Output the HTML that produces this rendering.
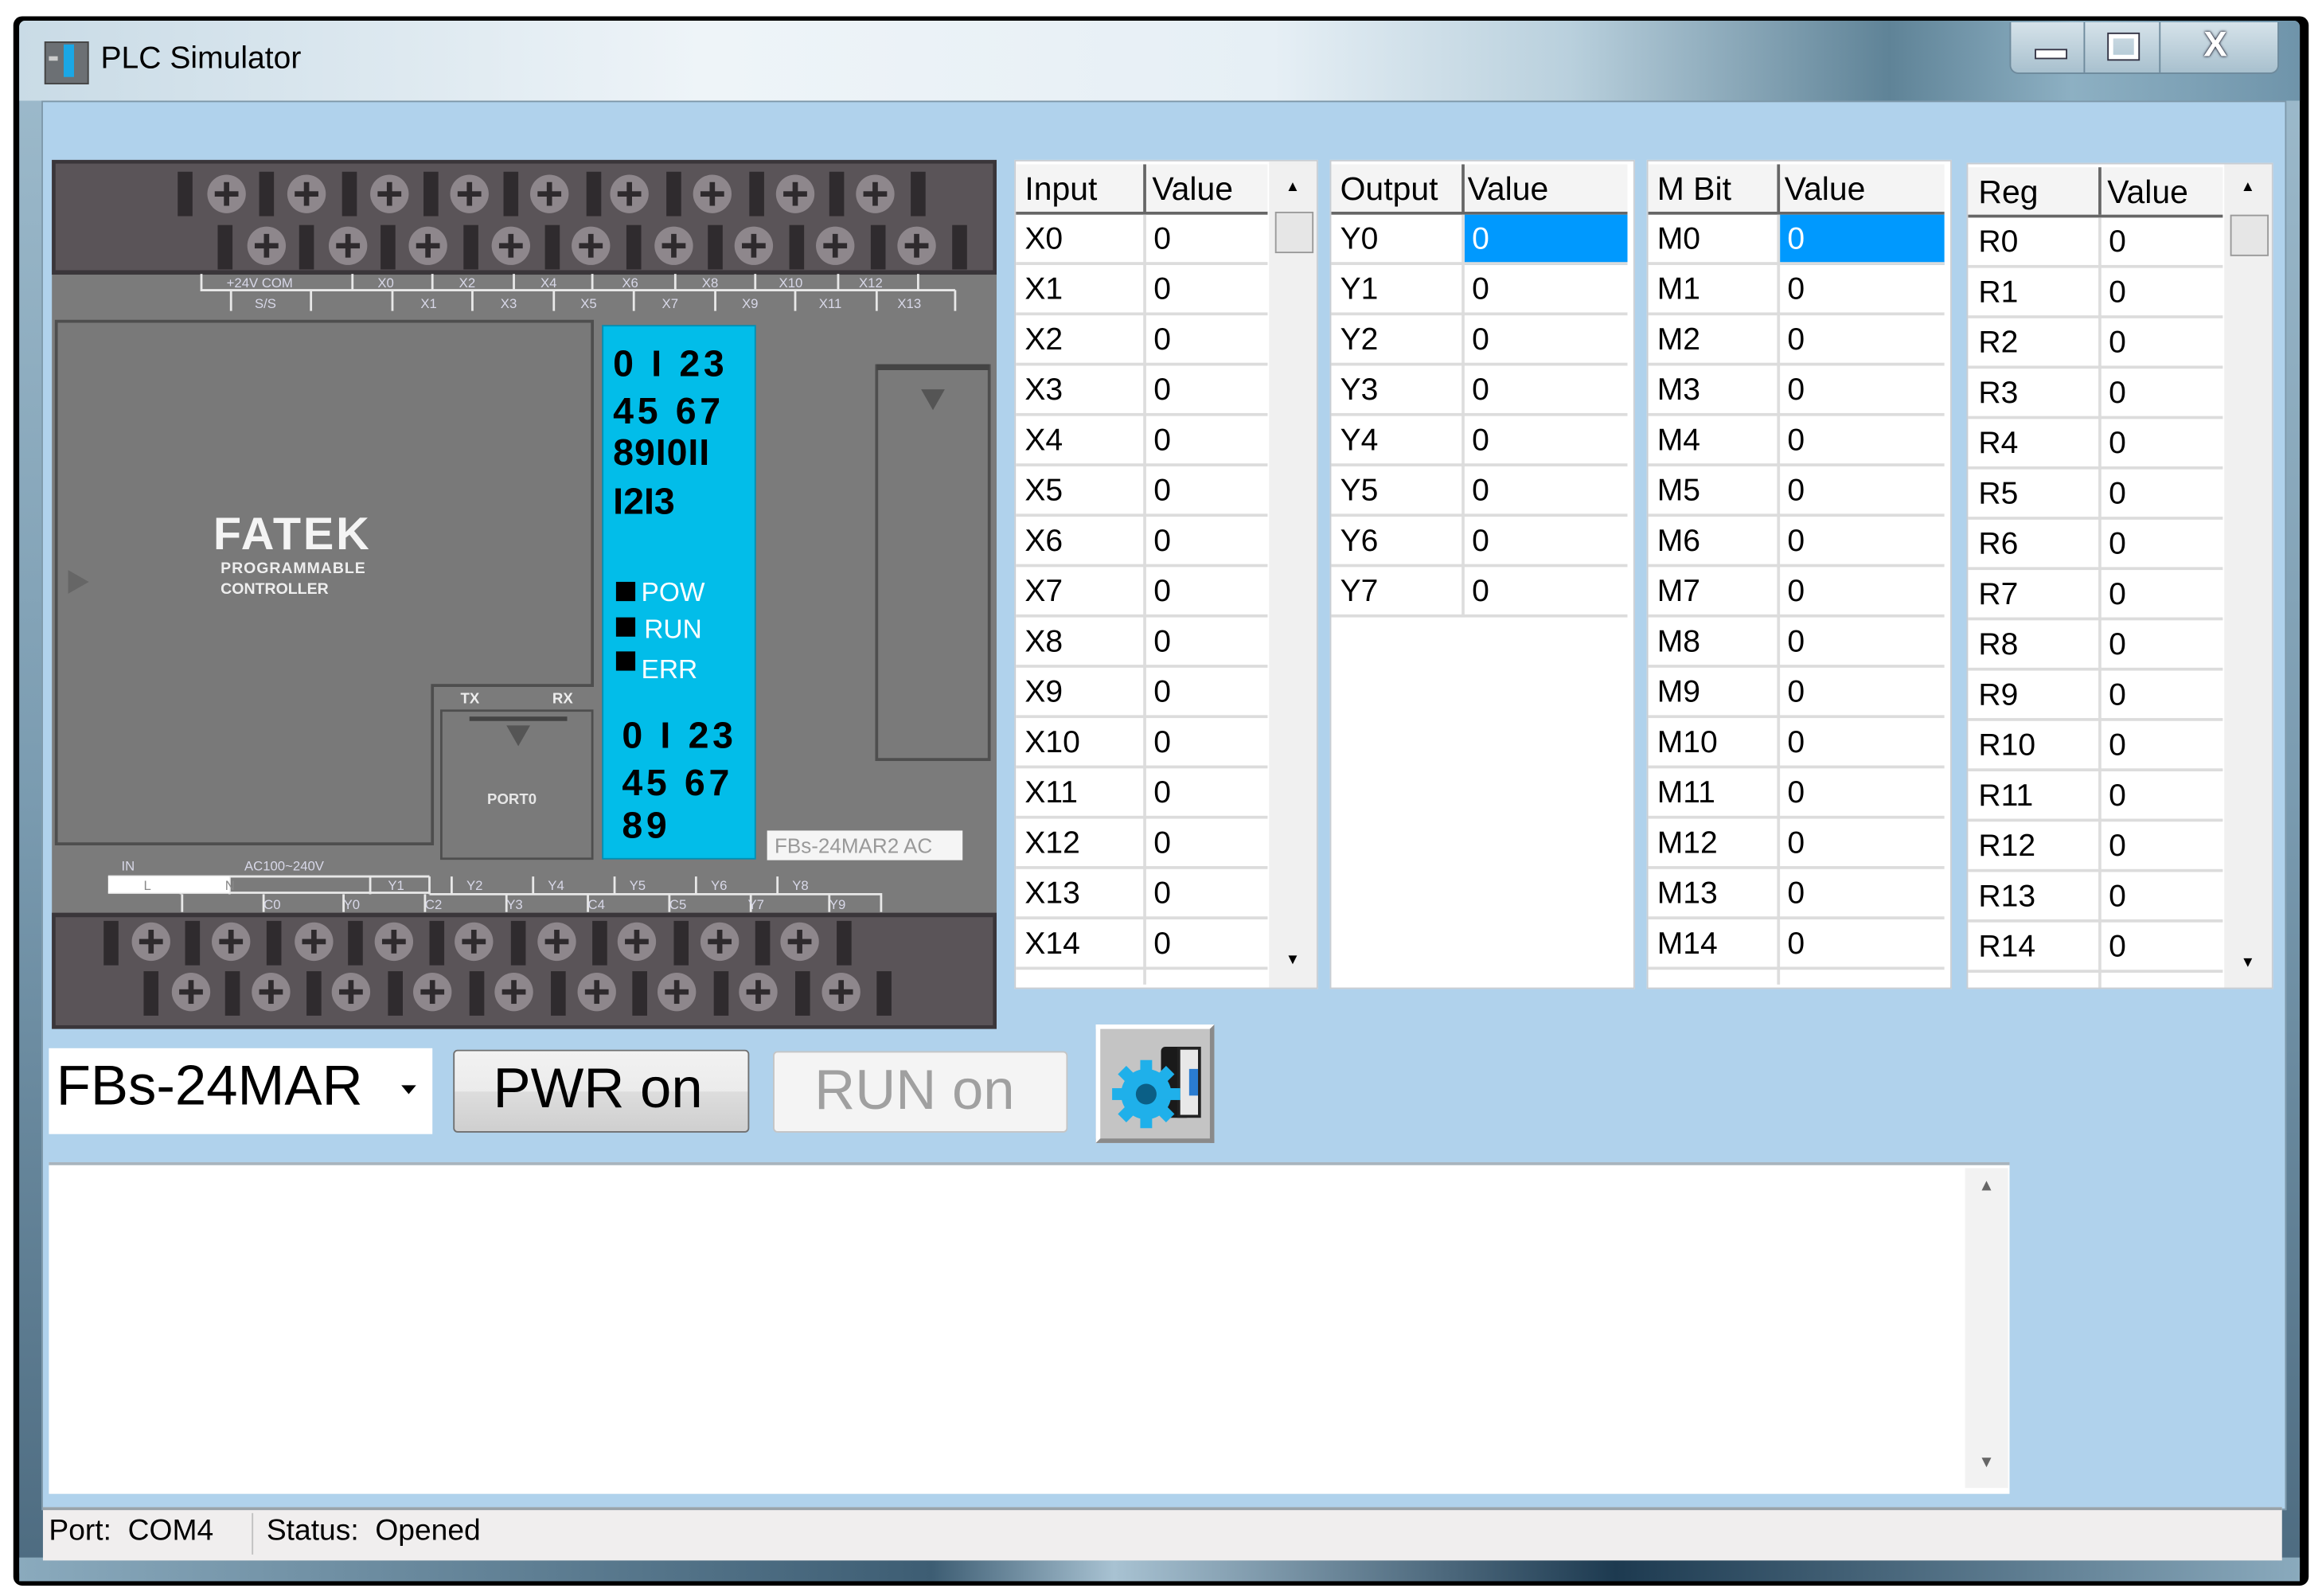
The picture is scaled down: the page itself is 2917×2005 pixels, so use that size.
<!DOCTYPE html>
<html><head><meta charset="utf-8">
<style>
html,body{margin:0;padding:0;background:#fff;overflow:hidden}
body{width:2917px;height:2005px;position:relative}
#w{position:absolute;left:0;top:0;width:1568px;height:1078px;transform:scale(1.86033,1.85993);transform-origin:0 0;font-family:"Liberation Sans",sans-serif}
.a{position:absolute}
.tbl{position:absolute;background:#fff;border:1px solid #c9cdd2;top:108px;height:558px;overflow:hidden}
.hd{position:absolute;top:2px;height:32px;background:#f4f4f4;border-bottom:2px solid #666;font-size:22px;line-height:34px;color:#000}
.r{position:absolute;left:0;height:32px;border-bottom:2px solid #dcdcdc;font-size:21px;line-height:34px;color:#000;box-sizing:content-box}
.r span{position:absolute;top:0}
.vl{position:absolute;top:2px;width:2px;background:#ddd}
.sb{position:absolute;background:#f0f0f0}
</style></head><body><div id="w">
<div class="a" style="left:9px;top:11px;width:1550px;height:1060px;background:#000;border-radius:6px"></div>
<div class="a" style="left:13px;top:14px;width:1540px;height:1052px;background:linear-gradient(180deg,#9fbccd 0%,#7a9bb0 50%,#4d6b80 100%);border-radius:4px"></div>
<div class="a" style="left:13px;top:14px;width:1540px;height:54px;background:linear-gradient(90deg,#c9dbe6 0%,#eef4f8 30%,#e6eff5 55%,#b9d0dd 68%,#5f8397 82%,#8db0c3 90%,#6f94aa 100%);border-radius:4px 4px 0 0"></div>
<div class="a" style="left:13px;top:1052px;width:1540px;height:16px;background:linear-gradient(90deg,#8aaabd,#3d5d73 40%,#a8c2d2 48%,#1d3a50 70%,#8aaabd)"></div>
<div class="a" style="left:30px;top:28px;width:28px;height:27px;background:#6c7074;border:1px solid #444"></div>
<div class="a" style="left:43px;top:30px;width:7px;height:22px;background:#1aa7e6"></div>
<div class="a" style="left:33px;top:38px;width:6px;height:3px;background:#ccc"></div>
<div class="a" style="left:68px;top:28px;font-size:21px;color:#000">PLC Simulator</div>
<div class="a" style="left:1357px;top:15px;width:180px;height:34px;border:1px solid #6e8a9c;border-top:none;border-radius:0 0 6px 6px;background:linear-gradient(180deg,#d6e3ea,#a8c0ce)"></div>
<div class="a" style="left:1407px;top:15px;width:1px;height:34px;background:#6e8a9c"></div>
<div class="a" style="left:1458px;top:15px;width:1px;height:34px;background:#6e8a9c"></div>
<div class="a" style="left:1374px;top:33px;width:20px;height:5px;background:#fff;border:1px solid #334"></div>
<div class="a" style="left:1424px;top:23px;width:14px;height:11px;border:3px solid #fff;outline:1px solid #334"></div>
<div class="a" style="left:1488px;top:17px;font-size:24px;font-weight:bold;color:#fff;text-shadow:0 0 2px #112,0 0 1px #112">X</div>
<div class="a" style="left:28px;top:68px;width:1514px;height:950px;background:#b0d2ec;border:1px solid #7d97a8"></div>
<svg class="a" style="left:35px;top:108px" width="638" height="587" viewBox="35 108 638 587">
<defs><g id="s"><circle r="13" fill="#8e878c"/><rect x="-8" y="-1.8" width="16" height="3.6" fill="#2e2a2d"/><rect x="-1.8" y="-8" width="3.6" height="16" fill="#2e2a2d"/></g></defs>
<rect x="35" y="108" width="638" height="587" fill="#7b7b7b"/>
<rect x="36" y="109" width="636" height="75" fill="#5a5458" stroke="#3a363a" stroke-width="3"/>
<rect x="36" y="618" width="636" height="76" fill="#5a5458" stroke="#3a363a" stroke-width="3"/>
<g fill="#2f2b2e">
<rect x="120" y="116" width="10" height="30"/><rect x="175" y="116" width="10" height="30"/><rect x="231" y="116" width="10" height="30"/><rect x="286" y="116" width="10" height="30"/><rect x="340" y="116" width="10" height="30"/><rect x="396" y="116" width="10" height="30"/><rect x="450" y="116" width="10" height="30"/><rect x="506" y="116" width="10" height="30"/><rect x="560" y="116" width="10" height="30"/><rect x="615" y="116" width="10" height="30"/>
<rect x="147" y="152" width="10" height="30"/><rect x="202" y="152" width="10" height="30"/><rect x="257" y="152" width="10" height="30"/><rect x="313" y="152" width="10" height="30"/><rect x="368" y="152" width="10" height="30"/><rect x="423" y="152" width="10" height="30"/><rect x="478" y="152" width="10" height="30"/><rect x="533" y="152" width="10" height="30"/><rect x="588" y="152" width="10" height="30"/><rect x="643" y="152" width="10" height="30"/>
<rect x="70" y="622" width="10" height="30"/><rect x="125" y="622" width="10" height="30"/><rect x="180" y="622" width="10" height="30"/><rect x="235" y="622" width="10" height="30"/><rect x="290" y="622" width="10" height="30"/><rect x="345" y="622" width="10" height="30"/><rect x="400" y="622" width="10" height="30"/><rect x="455" y="622" width="10" height="30"/><rect x="510" y="622" width="10" height="30"/><rect x="565" y="622" width="10" height="30"/>
<rect x="97" y="656" width="10" height="30"/><rect x="152" y="656" width="10" height="30"/><rect x="207" y="656" width="10" height="30"/><rect x="262" y="656" width="10" height="30"/><rect x="317" y="656" width="10" height="30"/><rect x="372" y="656" width="10" height="30"/><rect x="427" y="656" width="10" height="30"/><rect x="482" y="656" width="10" height="30"/><rect x="537" y="656" width="10" height="30"/><rect x="592" y="656" width="10" height="30"/>
</g>
<use href="#s" x="153" y="131"/><use href="#s" x="207" y="131"/><use href="#s" x="263" y="131"/><use href="#s" x="317" y="131"/><use href="#s" x="371" y="131"/><use href="#s" x="425" y="131"/><use href="#s" x="481" y="131"/><use href="#s" x="537" y="131"/><use href="#s" x="591" y="131"/>
<use href="#s" x="180" y="166"/><use href="#s" x="235" y="166"/><use href="#s" x="289" y="166"/><use href="#s" x="345" y="166"/><use href="#s" x="399" y="166"/><use href="#s" x="455" y="166"/><use href="#s" x="509" y="166"/><use href="#s" x="564" y="166"/><use href="#s" x="619" y="166"/>
<use href="#s" x="102" y="636"/><use href="#s" x="156" y="636"/><use href="#s" x="212" y="636"/><use href="#s" x="266" y="636"/><use href="#s" x="320" y="636"/><use href="#s" x="376" y="636"/><use href="#s" x="430" y="636"/><use href="#s" x="486" y="636"/><use href="#s" x="540" y="636"/>
<use href="#s" x="129" y="670"/><use href="#s" x="183" y="670"/><use href="#s" x="237" y="670"/><use href="#s" x="292" y="670"/><use href="#s" x="347" y="670"/><use href="#s" x="403" y="670"/><use href="#s" x="457" y="670"/><use href="#s" x="512" y="670"/><use href="#s" x="568" y="670"/>
<g stroke="#e8e8e8" stroke-width="1.5" fill="none">
<path d="M136 185 V196 H620 V185 M156 196 V210 M238 185 V196 M292 185 V196 M347 185 V196 M400 185 V196 M456 185 V196 M510 185 V196 M566 185 V196 M210 196 V210 M265 196 V210 M319 196 V210 M374 196 V210 M428 196 V210 M483 196 V210 M537 196 V210 M592 196 V210 M645 196 V210 M620 196 H645"/>
<path d="M73 603 H290 M73 592 H290 M122 592 V604 M155 592 V604 M290 592 V604 M290 604 H595 V616 M123 604 V616 M178 604 V616 M232 604 V616 M287 604 V616 M342 604 V616 M397 604 V616 M452 604 V616 M507 604 V616 M560 604 V616 M250 592 V604 M305 592 V604 M360 592 V604 M415 592 V604 M470 592 V604 M525 592 V604"/>
</g>
<rect x="73" y="592" width="82" height="11" fill="#fff"/>
<g font-size="9" fill="#d8d8e8" font-family="Liberation Sans">
<text x="153" y="194">+24V COM</text><text x="255" y="194">X0</text><text x="310" y="194">X2</text><text x="365" y="194">X4</text><text x="420" y="194">X6</text><text x="474" y="194">X8</text><text x="526" y="194">X10</text><text x="580" y="194">X12</text>
<text x="172" y="208">S/S</text><text x="284" y="208">X1</text><text x="338" y="208">X3</text><text x="392" y="208">X5</text><text x="447" y="208">X7</text><text x="501" y="208">X9</text><text x="553" y="208">X11</text><text x="606" y="208">X13</text>
<text x="82" y="588">IN</text><text x="165" y="588">AC100~240V</text><text x="97" y="601" fill="#888">L</text><text x="152" y="601" fill="#888">N</text>
<text x="262" y="601">Y1</text><text x="315" y="601">Y2</text><text x="370" y="601">Y4</text><text x="425" y="601">Y5</text><text x="480" y="601">Y6</text><text x="535" y="601">Y8</text>
<text x="178" y="614">C0</text><text x="232" y="614">Y0</text><text x="287" y="614">C2</text><text x="342" y="614">Y3</text><text x="397" y="614">C4</text><text x="452" y="614">C5</text><text x="505" y="614">Y7</text><text x="560" y="614">Y9</text>
</g>
<path d="M38 217 H400 V463 H292 V570 H38 Z" fill="#797979" stroke="#4e4e4e" stroke-width="2"/>
<path d="M298 480 H400 V580 H298 Z" fill="#7a7a7a" stroke="#4e4e4e" stroke-width="1.5"/>
<rect x="317" y="484" width="66" height="3" fill="#444"/>
<path d="M342 490 h16 l-8 14 z" fill="#555"/>
<text x="329" y="543" font-size="10" font-weight="bold" fill="#e6e6e6">PORT0</text>
<text x="311" y="475" font-size="10" font-weight="bold" fill="#eee">TX</text><text x="373" y="475" font-size="10" font-weight="bold" fill="#eee">RX</text>
<path d="M46 385 l14 8 l-14 8 z" fill="#666"/>
<text x="144" y="371" font-size="31" font-weight="bold" fill="#f4f4f4" letter-spacing="1.5">FATEK</text>
<text x="149" y="387" font-size="10.5" font-weight="bold" fill="#eee" letter-spacing="0.5">PROGRAMMABLE</text>
<text x="149" y="401" font-size="10.5" font-weight="bold" fill="#eee">CONTROLLER</text>
<rect x="592" y="247" width="76" height="266" fill="#7a7a7a" stroke="#4e4e4e" stroke-width="2"/>
<rect x="592" y="246" width="76" height="4" fill="#444"/>
<path d="M622 263 h16 l-8 14 z" fill="#555"/>
<rect x="518" y="561" width="132" height="20" fill="#f5f5f5"/>
<text x="523" y="576" font-size="14" fill="#999">FBs-24MAR2 AC</text>
<rect x="407" y="220" width="103" height="360" fill="#02bde9" stroke="#0090b5"/>
<g font-size="25" font-weight="bold" fill="#000">
<text x="414" y="254" letter-spacing="2.5">0 I 23</text><text x="414" y="286" letter-spacing="2.5">45 67</text><text x="414" y="314" letter-spacing="0.5">89I0II</text><text x="414" y="347" letter-spacing="0">I2I3</text>
<text x="420" y="505" letter-spacing="2.5">0 I 23</text><text x="420" y="537" letter-spacing="2.5">45 67</text><text x="420" y="566" letter-spacing="2.5">89</text></g>
<rect x="416" y="393" width="13" height="13" fill="#000"/><rect x="416" y="417" width="13" height="13" fill="#000"/><rect x="416" y="440" width="13" height="13" fill="#000"/>
<g font-size="18" fill="#fff"><text x="433" y="406">POW</text><text x="435" y="431">RUN</text><text x="433" y="458">ERR</text></g>
</svg>

<div class="tbl" style="left:685px;width:203px">
<div class="hd" style="left:0;width:170px"><span class="a" style="left:6px">Input</span><span class="a" style="left:92px">Value</span></div>
<div class="a" style="left:86px;top:2px;width:2px;height:32px;background:#666"></div>
<div class="vl" style="left:86px;top:36px;height:520px"></div>
<div class="sb" style="left:171px;top:0;width:32px;height:558px"></div>
<div class="a" style="left:175px;top:34px;width:24px;height:26px;background:#e6e6e6;border:1px solid #999"></div>
<div class="a" style="left:182px;top:12px;font-size:10px">▲</div><div class="a" style="left:182px;top:534px;font-size:10px">▼</div>
<div class="a" style="left:0;top:36px;width:170px">
<div class="r" style="top:0;width:170px"><span style="left:6px">X0</span><span style="left:93px">0</span></div>
<div class="r" style="top:34px;width:170px"><span style="left:6px">X1</span><span style="left:93px">0</span></div>
<div class="r" style="top:68px;width:170px"><span style="left:6px">X2</span><span style="left:93px">0</span></div>
<div class="r" style="top:102px;width:170px"><span style="left:6px">X3</span><span style="left:93px">0</span></div>
<div class="r" style="top:136px;width:170px"><span style="left:6px">X4</span><span style="left:93px">0</span></div>
<div class="r" style="top:170px;width:170px"><span style="left:6px">X5</span><span style="left:93px">0</span></div>
<div class="r" style="top:204px;width:170px"><span style="left:6px">X6</span><span style="left:93px">0</span></div>
<div class="r" style="top:238px;width:170px"><span style="left:6px">X7</span><span style="left:93px">0</span></div>
<div class="r" style="top:272px;width:170px"><span style="left:6px">X8</span><span style="left:93px">0</span></div>
<div class="r" style="top:306px;width:170px"><span style="left:6px">X9</span><span style="left:93px">0</span></div>
<div class="r" style="top:340px;width:170px"><span style="left:6px">X10</span><span style="left:93px">0</span></div>
<div class="r" style="top:374px;width:170px"><span style="left:6px">X11</span><span style="left:93px">0</span></div>
<div class="r" style="top:408px;width:170px"><span style="left:6px">X12</span><span style="left:93px">0</span></div>
<div class="r" style="top:442px;width:170px"><span style="left:6px">X13</span><span style="left:93px">0</span></div>
<div class="r" style="top:476px;width:170px"><span style="left:6px">X14</span><span style="left:93px">0</span></div>
</div></div>

<div class="tbl" style="left:898px;width:204px">
<div class="hd" style="left:0;width:200px"><span class="a" style="left:6px">Output</span><span class="a" style="left:92px">Value</span></div>
<div class="a" style="left:88px;top:2px;width:2px;height:32px;background:#666"></div>
<div class="a" style="left:0;top:36px;width:200px">
<div class="a" style="left:90px;top:0;width:110px;height:34px;background:#0099fe"></div>
<div class="vl" style="left:88px;top:0;height:272px"></div>
<div class="r" style="top:0;width:200px"><span style="left:6px">Y0</span><span style="left:95px;color:#fff">0</span></div>
<div class="r" style="top:34px;width:200px"><span style="left:6px">Y1</span><span style="left:95px">0</span></div>
<div class="r" style="top:68px;width:200px"><span style="left:6px">Y2</span><span style="left:95px">0</span></div>
<div class="r" style="top:102px;width:200px"><span style="left:6px">Y3</span><span style="left:95px">0</span></div>
<div class="r" style="top:136px;width:200px"><span style="left:6px">Y4</span><span style="left:95px">0</span></div>
<div class="r" style="top:170px;width:200px"><span style="left:6px">Y5</span><span style="left:95px">0</span></div>
<div class="r" style="top:204px;width:200px"><span style="left:6px">Y6</span><span style="left:95px">0</span></div>
<div class="r" style="top:238px;width:200px"><span style="left:6px">Y7</span><span style="left:95px">0</span></div>
</div></div>

<div class="tbl" style="left:1112px;width:204px">
<div class="hd" style="left:0;width:200px"><span class="a" style="left:6px">M Bit</span><span class="a" style="left:92px">Value</span></div>
<div class="a" style="left:87px;top:2px;width:2px;height:32px;background:#666"></div>
<div class="a" style="left:0;top:36px;width:200px">
<div class="a" style="left:89px;top:0;width:111px;height:34px;background:#0099fe"></div>
<div class="vl" style="left:87px;top:0;height:520px"></div>
<div class="r" style="top:0;width:200px"><span style="left:6px">M0</span><span style="left:94px;color:#fff">0</span></div>
<div class="r" style="top:34px;width:200px"><span style="left:6px">M1</span><span style="left:94px">0</span></div>
<div class="r" style="top:68px;width:200px"><span style="left:6px">M2</span><span style="left:94px">0</span></div>
<div class="r" style="top:102px;width:200px"><span style="left:6px">M3</span><span style="left:94px">0</span></div>
<div class="r" style="top:136px;width:200px"><span style="left:6px">M4</span><span style="left:94px">0</span></div>
<div class="r" style="top:170px;width:200px"><span style="left:6px">M5</span><span style="left:94px">0</span></div>
<div class="r" style="top:204px;width:200px"><span style="left:6px">M6</span><span style="left:94px">0</span></div>
<div class="r" style="top:238px;width:200px"><span style="left:6px">M7</span><span style="left:94px">0</span></div>
<div class="r" style="top:272px;width:200px"><span style="left:6px">M8</span><span style="left:94px">0</span></div>
<div class="r" style="top:306px;width:200px"><span style="left:6px">M9</span><span style="left:94px">0</span></div>
<div class="r" style="top:340px;width:200px"><span style="left:6px">M10</span><span style="left:94px">0</span></div>
<div class="r" style="top:374px;width:200px"><span style="left:6px">M11</span><span style="left:94px">0</span></div>
<div class="r" style="top:408px;width:200px"><span style="left:6px">M12</span><span style="left:94px">0</span></div>
<div class="r" style="top:442px;width:200px"><span style="left:6px">M13</span><span style="left:94px">0</span></div>
<div class="r" style="top:476px;width:200px"><span style="left:6px">M14</span><span style="left:94px">0</span></div>
</div></div>

<div class="tbl" style="left:1328px;width:205px;top:110px;height:556px">
<div class="hd" style="left:0;width:172px"><span class="a" style="left:7px">Reg</span><span class="a" style="left:94px">Value</span></div>
<div class="a" style="left:88px;top:2px;width:2px;height:32px;background:#666"></div>
<div class="vl" style="left:88px;top:36px;height:520px"></div>
<div class="sb" style="left:173px;top:0;width:32px;height:556px"></div>
<div class="a" style="left:177px;top:34px;width:24px;height:26px;background:#e6e6e6;border:1px solid #999"></div>
<div class="a" style="left:184px;top:10px;font-size:10px">▲</div><div class="a" style="left:184px;top:534px;font-size:10px">▼</div>
<div class="a" style="left:0;top:36px;width:172px">
<div class="r" style="top:0;width:172px"><span style="left:7px">R0</span><span style="left:95px">0</span></div>
<div class="r" style="top:34px;width:172px"><span style="left:7px">R1</span><span style="left:95px">0</span></div>
<div class="r" style="top:68px;width:172px"><span style="left:7px">R2</span><span style="left:95px">0</span></div>
<div class="r" style="top:102px;width:172px"><span style="left:7px">R3</span><span style="left:95px">0</span></div>
<div class="r" style="top:136px;width:172px"><span style="left:7px">R4</span><span style="left:95px">0</span></div>
<div class="r" style="top:170px;width:172px"><span style="left:7px">R5</span><span style="left:95px">0</span></div>
<div class="r" style="top:204px;width:172px"><span style="left:7px">R6</span><span style="left:95px">0</span></div>
<div class="r" style="top:238px;width:172px"><span style="left:7px">R7</span><span style="left:95px">0</span></div>
<div class="r" style="top:272px;width:172px"><span style="left:7px">R8</span><span style="left:95px">0</span></div>
<div class="r" style="top:306px;width:172px"><span style="left:7px">R9</span><span style="left:95px">0</span></div>
<div class="r" style="top:340px;width:172px"><span style="left:7px">R10</span><span style="left:95px">0</span></div>
<div class="r" style="top:374px;width:172px"><span style="left:7px">R11</span><span style="left:95px">0</span></div>
<div class="r" style="top:408px;width:172px"><span style="left:7px">R12</span><span style="left:95px">0</span></div>
<div class="r" style="top:442px;width:172px"><span style="left:7px">R13</span><span style="left:95px">0</span></div>
<div class="r" style="top:476px;width:172px"><span style="left:7px">R14</span><span style="left:95px">0</span></div>
</div></div>

<div class="a" style="left:33px;top:708px;width:259px;height:58px;background:#fff"></div>
<div class="a" style="left:38px;top:713px;font-size:38px;color:#000">FBs-24MAR</div>
<div class="a" style="left:271px;top:733px;width:0;height:0;border-left:5px solid transparent;border-right:5px solid transparent;border-top:6px solid #000"></div>
<div class="a" style="left:306px;top:709px;width:198px;height:54px;border:1px solid #707070;border-radius:3px;background:linear-gradient(180deg,#f2f2f2 0%,#ebebeb 50%,#dddddd 51%,#cfcfcf 100%)"></div>
<div class="a" style="left:333px;top:715px;font-size:38px;color:#000">PWR on</div>
<div class="a" style="left:522px;top:710px;width:197px;height:53px;border:1px solid #c5c5c5;border-radius:3px;background:#f4f4f4"></div>
<div class="a" style="left:550px;top:716px;font-size:38px;color:#a0a0a0">RUN on</div>
<div class="a" style="left:740px;top:692px;width:80px;height:80px;background:#c4c4c4;border-top:3px solid #fff;border-left:3px solid #fff;border-right:3px solid #8a8a8a;border-bottom:3px solid #8a8a8a;box-sizing:border-box"></div>
<svg class="a" style="left:746px;top:698px" width="70" height="68" viewBox="0 0 70 68">
<rect x="38" y="9" width="20" height="48" rx="3" fill="#1a1a1a"/>
<rect x="50" y="10" width="14" height="46" fill="#e8e8e8" stroke="#222" stroke-width="2"/>
<rect x="57" y="24" width="6" height="18" fill="#2a7cd0"/>
<g transform="translate(28,41)" fill="#1fb0ea">
<circle r="17"/>
<g><rect x="-4" y="-23" width="8" height="46"/><rect x="-4" y="-23" width="8" height="46" transform="rotate(45)"/><rect x="-4" y="-23" width="8" height="46" transform="rotate(90)"/><rect x="-4" y="-23" width="8" height="46" transform="rotate(135)"/></g>
<circle r="7" fill="#0b5f86"/></g>
</svg>
<div class="a" style="left:33px;top:785px;width:1324px;height:222px;background:#fff;border-top:2px solid #a8b4bd"></div>
<div class="a" style="left:1327px;top:789px;width:29px;height:216px;background:#f2f2f2"></div>
<div class="a" style="left:1336px;top:795px;font-size:11px;color:#666">▲</div>
<div class="a" style="left:1336px;top:982px;font-size:11px;color:#666">▼</div>
<div class="a" style="left:29px;top:1018px;width:1512px;height:34px;background:#f0eeee;border-top:2px solid #99a3aa"></div>
<div class="a" style="left:170px;top:1022px;width:1px;height:28px;background:#c0c0c0"></div>
<div class="a" style="left:33px;top:1023px;font-size:20px;color:#000;white-space:pre">Port:  COM4</div>
<div class="a" style="left:180px;top:1023px;font-size:20px;color:#000;white-space:pre">Status:  Opened</div>
</div></body></html>
